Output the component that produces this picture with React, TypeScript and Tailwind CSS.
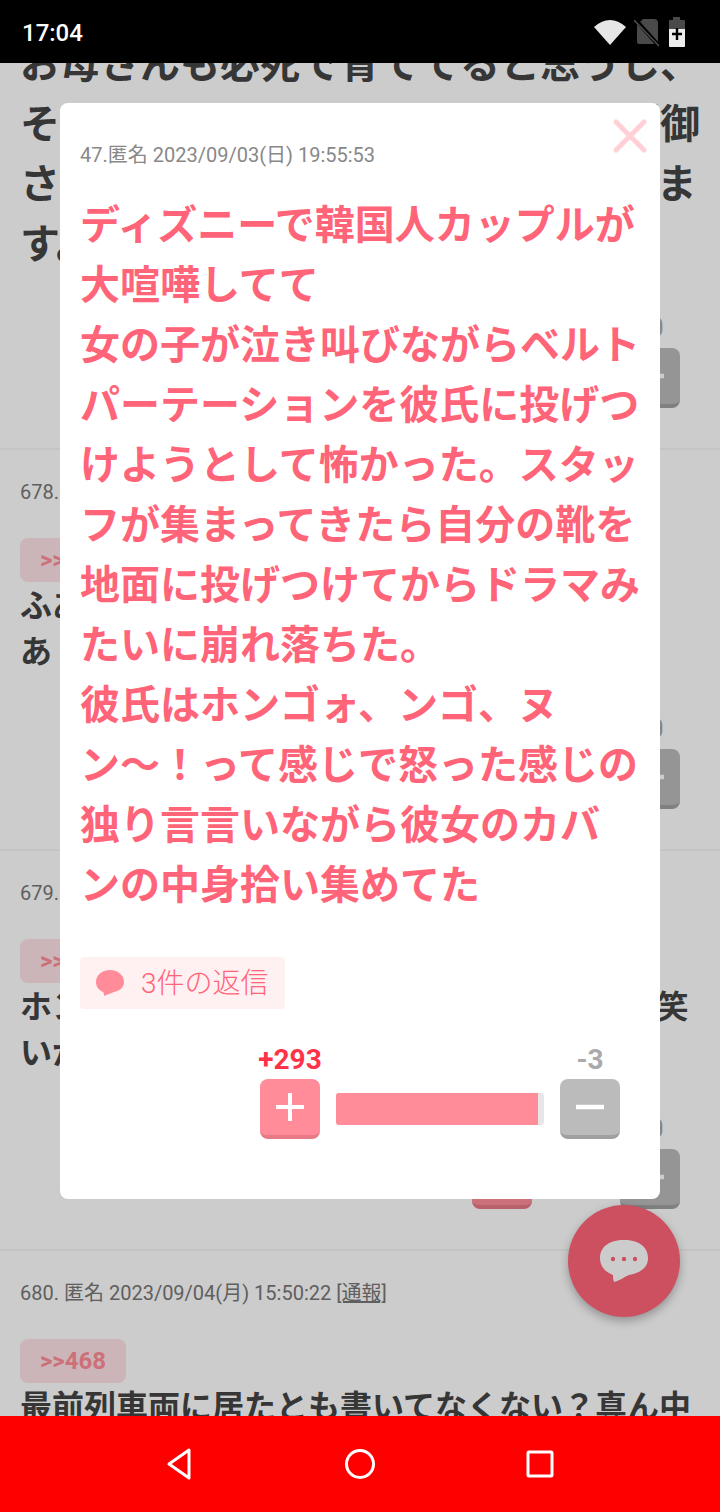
const TITLE_LINES = [
  'ディズニーで韓国人カップルが',
  '大喧嘩してて',
  '女の子が泣き叫びながらベルト',
  'パーテーションを彼氏に投げつ',
  'けようとして怖かった。スタッ',
  'フが集まってきたら自分の靴を',
  '地面に投げつけてからドラマみ',
  'たいに崩れ落ちた。',
  '彼氏はホンゴォ、ンゴ、ヌ',
  'ン〜！って感じで怒った感じの',
  '独り言言いながら彼女のカバ',
  'ンの中身拾い集めてた',
];

const POSTS = [
  {
    meta: '678. 匿名 2023/09/04(月) 15:12:08',
    reply: '>>468',
    lines: ['ふあんになる話だけど', 'あ・・・れは仕方ないと思う'],
  },
  {
    meta: '679. 匿名 2023/09/04(月) 15:31:47',
    reply: '>>468',
    lines: ['ホンゴォって何だろうと思いながら読んだら笑', 'いかにもありそうな話だと思いました'],
  },
  {
    meta: '680. 匿名 2023/09/04(月) 15:50:22',
    reply: '>>468',
    lines: ['最前列車両に居たとも書いてなくない？真ん中'],
  },
];

function PlusIcon() {
  return (
    <svg width="28" height="28" viewBox="0 0 28 28" stroke="currentColor" strokeWidth="4">
      <path d="M14 0 V28 M0 14 H28" />
    </svg>
  );
}

function MinusIcon() {
  return (
    <svg width="28" height="28" viewBox="0 0 28 28" stroke="currentColor" strokeWidth="4.5">
      <path d="M0 14 H28" />
    </svg>
  );
}

function VoteButtons() {
  return (
    <div className="mt-auto flex justify-end gap-[88px] pr-10">
      <div className="flex flex-col items-center">
        <span className="text-[28px] leading-[34px] font-bold text-[#ff3348]">+12</span>
        <div className="mt-[3px] flex h-[60px] w-[60px] items-center justify-center rounded-lg border-b-4 border-[#e87a86] bg-[#ff8c98] text-white">
          <PlusIcon />
        </div>
      </div>
      <div className="flex flex-col items-center">
        <span className="text-[28px] leading-[34px] font-bold text-[#aaaaaa]">-0</span>
        <div className="mt-[3px] flex h-[60px] w-[60px] items-center justify-center rounded-lg border-b-4 border-[#a0a0a0] bg-[#bbbbbb] text-white">
          <MinusIcon />
        </div>
      </div>
    </div>
  );
}

function Post({ meta, reply, lines, last }: { meta: string; reply: string; lines: string[]; last?: boolean }) {
  return (
    <section className={`flex h-[400.5px] flex-col pt-[28px] pb-[40px] ${last ? '' : 'border-b-2 border-[#f5f5f5]'}`}>
      <p className="px-5 text-[20px] leading-[28px] text-[#777777]">
        {meta} <span className="underline">[通報]</span>
      </p>
      <span className="mt-[32px] ml-5 flex h-11 w-[106px] items-center justify-center rounded-lg bg-[#ffe3e6] text-[24px] font-bold text-[#ff8c98]">
        {reply}
      </span>
      <div className="px-5 pt-[1px] text-[32px] leading-[46px] font-bold whitespace-nowrap text-[#444444]">
        {lines.map((line) => (
          <div key={line}>{line}</div>
        ))}
      </div>
      {!last && <VoteButtons />}
    </section>
  );
}

function StatusBar() {
  return (
    <header className="flex h-[63px] shrink-0 items-center justify-between bg-black pr-[34px] pl-[22px]">
      <span className="mt-[2px] text-[24px] font-medium text-white">17:04</span>
      <div className="flex items-center">
        <svg width="32" height="26" viewBox="0 0 32 26" className="mr-2">
          <path d="M0 8 Q16 -6 32 8 L16 26 Z" fill="#e6e6e6" />
        </svg>
        <svg width="26" height="30" viewBox="0 0 26 30" className="mr-2">
          <path d="M9 2 H20 Q24 2 24 6 V25 Q24 27 22 27 H5 Q3 27 3 25 V8 Z" fill="#4a4a4a" />
          <path d="M1 2 L25 29" stroke="#000" strokeWidth="4" />
          <path d="M0 3 L25 29" stroke="#4a4a4a" strokeWidth="1.6" />
        </svg>
        <svg width="18" height="30" viewBox="0 0 18 30">
          <path d="M5 0 H12 V3 H16 Q17 3 17 4 V29 Q17 30 16 30 H2 Q1 30 1 29 V4 Q1 3 2 3 H5 Z" fill="#4a4a4a" />
          <path d="M1 12 H17 V29 Q17 30 16 30 H2 Q1 30 1 29 Z" fill="#ececec" />
          <path d="M9 11 V23 M4 17 H14" stroke="#000" strokeWidth="2.4" />
        </svg>
      </div>
    </header>
  );
}

function NavBar() {
  return (
    <nav className="flex h-[96px] shrink-0 items-center justify-center bg-[#ff0000]">
      <div className="flex w-[180px] justify-center">
        <svg width="32" height="34" viewBox="0 0 32 34" fill="none" stroke="#ffffff" strokeWidth="3" strokeLinejoin="round">
          <path d="M25 3 V31 L5 17 Z" />
        </svg>
      </div>
      <div className="flex w-[180px] justify-center">
        <svg width="32" height="32" viewBox="0 0 32 32" fill="none" stroke="#ffffff" strokeWidth="3">
          <circle cx="16" cy="16" r="13.5" />
        </svg>
      </div>
      <div className="flex w-[180px] justify-center">
        <svg width="28" height="28" viewBox="0 0 28 28" fill="none" stroke="#ffffff" strokeWidth="3" strokeLinejoin="round">
          <rect x="2" y="2" width="24" height="24" rx="1" />
        </svg>
      </div>
    </nav>
  );
}

export default function App() {
  return (
    <div className="flex h-[1512px] w-[720px] flex-col overflow-hidden bg-white font-[family-name:Roboto,'Noto_Sans_CJK_JP',sans-serif]">
      <StatusBar />

      <main className="relative min-h-0 flex-1 overflow-hidden">
        {/* page behind the dialog */}
        <div className="-mt-[28px]">
          <section className="flex h-[415px] flex-col border-b-2 border-[#f5f5f5] pb-[40px]">
            <div className="px-5 text-[40px] leading-[60px] font-bold whitespace-nowrap text-[#444444]">
              <div>お母さんも必死で育ててると思うし、</div>
              <div>そういう子供を完全に親だけでは制御</div>
              <div>されるのはとても難しいと私は思いま</div>
              <div>す。</div>
            </div>
            <VoteButtons />
          </section>
          {POSTS.map((post, i) => (
            <Post key={post.meta} {...post} last={i === POSTS.length - 1} />
          ))}
        </div>

        <button className="absolute top-[1142px] left-[568px] flex h-[112px] w-[112px] items-center justify-center rounded-full bg-[#ff6478] shadow-[0_4px_10px_rgba(0,0,0,0.28)]">
          <svg width="50" height="44" viewBox="0 0 50 44">
            <path d="M25 1 C40 1 49 8 49 19 C49 29 41 34 30 36 C25 38 20 42 15 43 C14 40 14 38 14 36 C6 33 1 27 1 19 C1 8 10 1 25 1 Z" fill="#ffffff" />
            <circle cx="14" cy="20" r="2.2" fill="#ff6478" />
            <circle cx="25" cy="20" r="2.2" fill="#ff6478" />
            <circle cx="36" cy="20" r="2.2" fill="#ff6478" />
          </svg>
        </button>

        {/* dim layer + dialog */}
        <div className="absolute inset-0 flex items-start justify-center bg-black/20 pt-10">
          <div className="relative h-[1096px] w-[600px] rounded-lg bg-white px-5 pt-[38px]">
            <svg width="34" height="34" viewBox="0 0 34 34" className="absolute top-[16px] right-[13px]" stroke="#ffd0d5" strokeWidth="5" strokeLinecap="round">
              <path d="M3 3 L31 31 M31 3 L3 31" />
            </svg>
            <p className="text-[20px] leading-[28px] text-[#888888]">47.匿名 2023/09/03(日) 19:55:53</p>
            <div className="mt-[27px] text-[40px] leading-[60px] font-bold whitespace-nowrap text-[#ff6478]">
              {TITLE_LINES.map((line) => (
                <div key={line}>{line}</div>
              ))}
            </div>
            <div className="mt-[41px] flex h-[52px] w-[205px] items-center rounded bg-[#fff0f1] pl-4">
              <svg width="28" height="26" viewBox="0 0 28 26">
                <path d="M14 0 C22 0 28 5 28 12 C28 18 23 21 18 22 C15 23 11 25 8 26 C8 24 8 23 7 22 C3 20 0 17 0 12 C0 5 6 0 14 0 Z" fill="#ff8c98" />
              </svg>
              <span className="mt-[2px] ml-[17px] text-[28px] font-light text-[#ff6478]">3件の返信</span>
            </div>
            <div className="mt-[34px] flex items-end pl-[180px]">
              <div className="flex w-[60px] flex-col items-center">
                <span className="text-[28px] leading-[34px] font-bold whitespace-nowrap text-[#ff3348]">+293</span>
                <div className="mt-[2px] flex h-[60px] w-[60px] items-center justify-center rounded-lg border-b-4 border-[#e87a86] bg-[#ff8c98] text-white">
                  <PlusIcon />
                </div>
              </div>
              <div className="mx-4 mb-[14px] h-8 w-[208px] overflow-hidden rounded-[3px] bg-[#e6e6e6]">
                <div className="h-full bg-[#ff8c98]" style={{ width: `${(293 / 296) * 100 - 2}%` }} />
              </div>
              <div className="flex w-[60px] flex-col items-center">
                <span className="text-[28px] leading-[34px] font-bold text-[#aaaaaa]">-3</span>
                <div className="mt-[2px] flex h-[60px] w-[60px] items-center justify-center rounded-lg border-b-4 border-[#a0a0a0] bg-[#bbbbbb] text-white">
                  <MinusIcon />
                </div>
              </div>
            </div>
          </div>
        </div>
      </main>

      <NavBar />
    </div>
  );
}
